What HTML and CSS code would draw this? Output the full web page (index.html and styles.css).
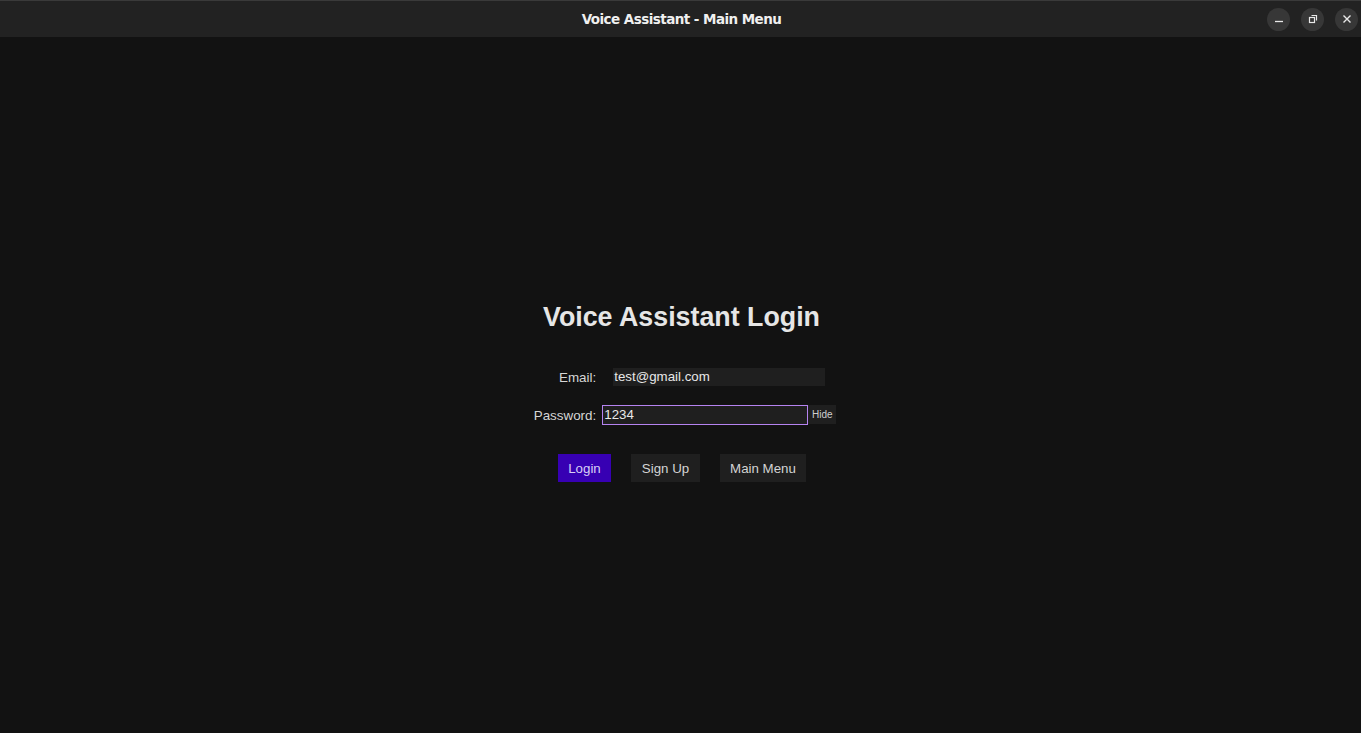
FILE: index.html
```html
<!DOCTYPE html>
<html>
<head>
<meta charset="utf-8">
<title>Voice Assistant - Main Menu</title>
<link rel="stylesheet" href="styles.css">
</head>
<body>
<div class="window">
  <header class="titlebar">
    <div class="titlebar-spacer"></div>
    <div class="titlebar-title">Voice Assistant - Main Menu</div>
    <div class="titlebar-controls">
      <span class="wc">
        <svg width="10" height="10" viewBox="0 0 10 10"><path d="M1 7.5h8" stroke="#e8e8e8" stroke-width="1.3"/></svg>
      </span>
      <span class="wc">
        <svg width="10" height="10" viewBox="0 0 10 10"><rect x="1.5" y="3.5" width="5" height="5" fill="none" stroke="#e8e8e8" stroke-width="1.2"/><path d="M3.5 1.5h5v5" fill="none" stroke="#e8e8e8" stroke-width="1.2"/></svg>
      </span>
      <span class="wc">
        <svg width="10" height="10" viewBox="0 0 10 10"><path d="M1.5 1.5l7 7M8.5 1.5l-7 7" stroke="#e8e8e8" stroke-width="1.4"/></svg>
      </span>
    </div>
  </header>
  <main class="content">
    <div class="login">
      <h1 class="login-title">Voice Assistant Login</h1>
      <div class="form">
        <label class="form-label">Email:</label>
        <div class="form-cell form-cell--center">
          <div class="entry entry--email">test@gmail.com</div>
        </div>
        <label class="form-label">Password:</label>
        <div class="form-cell">
          <div class="entry entry--focus">1234</div>
          <button class="hide-btn">Hide</button>
        </div>
      </div>
      <div class="actions">
        <button class="btn btn--primary">Login</button>
        <button class="btn btn--signup">Sign Up</button>
        <button class="btn btn--menu">Main Menu</button>
      </div>
    </div>
  </main>
</div>
</body>
</html>
```
FILE: styles.css
```css
* { box-sizing: border-box; }
html, body {
  margin: 0;
  padding: 0;
  height: 100%;
  background: #121212;
  font-family: "Liberation Sans", Arial, sans-serif;
}
.window {
  height: 733px;
  display: flex;
  flex-direction: column;
}
.titlebar {
  height: 37px;
  flex: none;
  background: #222222;
  border-top: 1px solid #3a3a3a;
  display: flex;
  align-items: center;
}
.titlebar-spacer { width: 110px; }
.titlebar-title {
  flex: 1;
  text-align: center;
  color: #f0f0f0;
  font-family: "DejaVu Sans", sans-serif;
  font-weight: bold;
  font-size: 13.5px;
  letter-spacing: -0.55px;
  padding-left: 2px;
}
.titlebar-controls {
  width: 110px;
  display: flex;
  justify-content: flex-end;
  gap: 11px;
  padding-right: 3px;
}
.wc {
  width: 23px;
  height: 23px;
  border-radius: 50%;
  background: #373737;
  display: flex;
  align-items: center;
  justify-content: center;
}
.content {
  flex: 1;
  display: flex;
  align-items: center;
  justify-content: center;
  padding-top: 14px;
}
.login {
  display: flex;
  flex-direction: column;
  align-items: center;
}
.login-title {
  margin: 0 0 36px;
  color: #e6e6e6;
  font-size: 26.8px;
  font-weight: bold;
  line-height: 30px;
  padding-left: 2px;
}
.form {
  display: grid;
  grid-template-columns: auto 234px;
  column-gap: 6px;
  row-gap: 19px;
  align-items: center;
  padding-left: 9px;
  color: #d6d6d6;
  font-size: 13.4px;
}
.form-label { text-align: right; }
.form-cell { display: flex; align-items: stretch; }
.form-cell--center { justify-content: center; }
.entry {
  background: #1f1f1f;
  color: #e8e8e8;
  font-size: 13.3px;
  line-height: 18px;
  height: 18px;
  padding: 0 1px;
}
.entry--email { width: 212px; }
.entry--focus {
  width: 206px;
  height: 20px;
  border: 1px solid #b583f0;
  padding: 0 1px;
}
.hide-btn {
  width: 28px;
  height: 19px;
  border: none;
  background: #1f1f1f;
  color: #cfcfcf;
  font-family: "Liberation Sans", Arial, sans-serif;
  font-size: 10px;
  padding: 0;
}
.actions {
  margin-top: 29px;
  display: flex;
  gap: 20px;
  padding-left: 3px;
}
.btn {
  height: 28px;
  padding: 0;
  border: none;
  background: #1f1f1f;
  color: #d4d4d4;
  font-family: "Liberation Sans", Arial, sans-serif;
  font-size: 13.3px;
  text-align: center;
}
.btn--primary {
  width: 53px;
  background: #3700b3;
  color: #d8cff5;
}
.btn--signup { width: 69px; }
.btn--menu { width: 86px; }
```
